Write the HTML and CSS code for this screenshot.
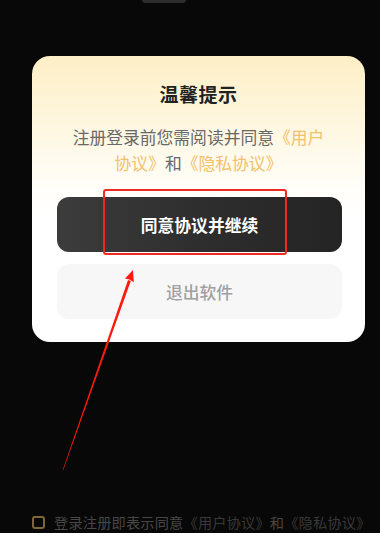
FILE: index.html
```html
<!DOCTYPE html>
<html lang="zh">
<head>
<meta charset="utf-8">
<link rel="stylesheet" href="styles.css">
</head>
<body>
<div class="screen">
  <div class="notch"></div>
  <div class="modal">
    <div class="title">温馨提示</div>
    <p class="desc">注册登录前您需阅读并同意<span class="link">《用户协议》</span>和<span class="link">《隐私协议》</span></p>
    <div class="actions">
      <button class="btn btn-primary">同意协议并继续</button>
      <button class="btn btn-secondary">退出软件</button>
    </div>
  </div>
  <div class="footer">
    <span class="checkbox"></span>
    <span class="agree">登录注册即表示同意<span class="dim">《用户协议》</span>和<span class="dim">《隐私协议》</span></span>
  </div>
  <div class="highlight"></div>
  <svg class="arrow" width="380" height="533" viewBox="0 0 380 533">
    <polygon points="63.3,470.1 62.7,469.9 128.0,279.9 130.8,280.9" fill="#ff1a0e"/>
    <polygon points="133,270 133.8,282.2 129.4,279.6 125.0,278.6" fill="#ff1a0e"/>
  </svg>
</div>
</body>
</html>
```
FILE: styles.css
```css
* { box-sizing: border-box; }
html, body { margin: 0; padding: 0; }
body {
  background: #080808;
  font-family: "Noto Sans CJK SC", "Noto Sans", sans-serif;
}
.screen {
  position: relative;
  width: 380px;
  height: 533px;
  display: flex;
  flex-direction: column;
  overflow: hidden;
}
.notch {
  width: 44px;
  height: 3px;
  margin-left: 142px;
  background: #2c2c2c;
  border-radius: 0 0 12px 12px;
}
.modal {
  margin: 53px 0 0 32px;
  width: 333px;
  height: 286px;
  border-radius: 18px;
  background: linear-gradient(180deg, #fdefc6 0%, #fef8e6 30%, #fffefb 48%, #ffffff 56%);
  padding: 25px 0 0;
  display: flex;
  flex-direction: column;
  align-items: center;
}
.title {
  font-size: 19px;
  line-height: 26px;
  font-weight: 700;
  color: #222;
  letter-spacing: 0.5px;
}
.desc {
  margin: 17px 0 0;
  width: 263px;
  font-size: 16.8px;
  line-height: 26px;
  color: #686868;
  text-align: center;
}
.link { color: #f2c16a; }
.actions {
  margin-top: 21px;
  width: 100%;
  padding: 0 23px 0 25px;
  display: flex;
  flex-direction: column;
  gap: 12px;
}
.btn {
  border: none;
  height: 55px;
  border-radius: 12px;
  font-family: inherit;
  font-size: 16.8px;
  width: 100%;
}
.btn-primary {
  background: linear-gradient(90deg, #3c3c3c 0%, #2e2e2e 50%, #242424 100%);
  color: #fff;
  font-weight: 700;
}
.btn-secondary {
  background: #f7f7f7;
  color: #a0a0a0;
  font-weight: 500;
}
.footer {
  margin-top: auto;
  padding: 0 0 0 32px;
  height: 22px;
  display: flex;
  align-items: center;
  gap: 9px;
}
.checkbox {
  width: 13px;
  height: 13px;
  border: 2px solid #7d6638;
  border-radius: 3px;
  flex: none;
}
.agree {
  font-size: 14.2px;
  letter-spacing: 0.2px;
  line-height: 20px;
  color: #474747;
  white-space: nowrap;
}
.dim { color: #393939; }
.highlight {
  position: absolute;
  left: 103px;
  top: 189px;
  width: 184px;
  height: 66px;
  border: 2px solid #ee2a20;
  border-radius: 3px;
}
.arrow {
  position: absolute;
  left: 0;
  top: 0;
}
```
